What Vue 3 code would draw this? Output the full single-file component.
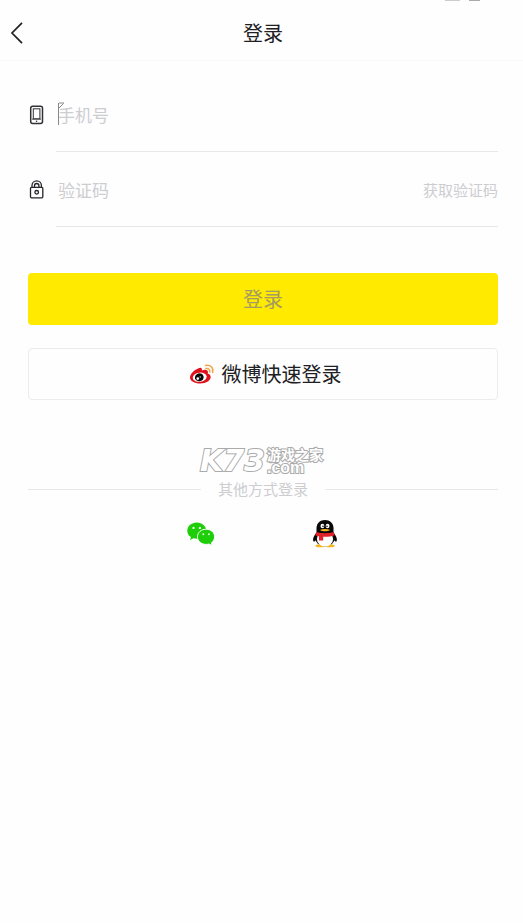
<script setup>
import { ref } from 'vue'

const phone = ref('')
const code = ref('')
</script>

<template>
  <div class="page">
    <div class="status" aria-hidden="true"><i class="long"></i><i></i></div>
    <header class="header">
      <button class="back" type="button" aria-label="返回">
        <svg width="14" height="24" viewBox="0 0 14 24" fill="none" stroke="#222" stroke-width="1.7">
          <path d="M12 1.8 2 12l10 10.2" />
        </svg>
      </button>
      <h1>登录</h1>
    </header>

    <main class="content">
      <form class="form" @submit.prevent>
        <div class="row">
          <label for="phone" aria-label="手机号">
            <svg width="17" height="20" viewBox="0 0 17 20" fill="none" stroke="#303036">
              <rect x="2.700" y="1.300" width="11.800" height="17.200" rx="2" stroke-width="1.500" />
              <rect x="5.300" y="3.800" width="6.600" height="10" stroke-width="1" />
              <path d="M4 14.200h9" stroke-width=".8" />
              <circle cx="8.600" cy="16.200" r=".8" fill="#303036" stroke="none" />
            </svg>
          </label>
          <div class="field">
            <input id="phone" v-model="phone" type="tel" placeholder="手机号">
            <svg class="caret" width="8" height="24" viewBox="0 0 8 24" fill="none" stroke="#888">
              <path d="M1.500 23V1M2 1h5M6.500 1.500 2 6" />
            </svg>
          </div>
        </div>
        <div class="row">
          <label for="code" aria-label="验证码">
            <svg width="17" height="20" viewBox="0 0 17 20" fill="none" stroke="#25252b" stroke-width="1.300">
              <rect x="2.500" y="7.300" width="12.300" height="10.500" rx="1" />
              <path d="M4 7.300V5.500a4.700 4.700 0 0 1 9.400 0v1.800M6.500 7.300V5.700a2.200 2.200 0 0 1 4.400 0v1.600" />
              <circle cx="8.700" cy="12.300" r="1.800" />
            </svg>
          </label>
          <div class="field">
            <input id="code" v-model="code" type="text" placeholder="验证码">
            <button class="send" type="button">获取验证码</button>
          </div>
        </div>
        <button class="button login" type="submit">登录</button>
        <button class="button weibo" type="button">
          <svg width="26" height="22" viewBox="0 0 26 22">
            <path d="M9.100 5.400C5.300 6.800 1 11 1 14.600c0 3.600 4.700 6 10.100 6 6.400 0 10.600-3.400 10.600-6.500 0-2.200-1.700-3.200-3-3.600.7-1.800.1-3.200-1.500-3.600-1.500-.4-3.200.1-4.400.6.6-2.300-.8-3.400-3.700-2.100Z" fill="#df101b" />
            <ellipse cx="10.700" cy="14.200" rx="7" ry="4.600" fill="#fff" transform="rotate(-6 10.700 14.200)" />
            <ellipse cx="10.300" cy="14.300" rx="4.400" ry="3.900" fill="#090909" transform="rotate(-15 10.300 14.300)" />
            <circle cx="8.800" cy="15.600" r="1.300" fill="#fff" />
            <circle cx="11.200" cy="13.900" r=".6" fill="#fff" />
            <path d="M16.500 2.500c4.800-1.200 8.400 2.400 7.100 7.100M16.900 5.600c2.600-.6 4.400 1.100 3.800 3.500" fill="none" stroke="#f2a54b" stroke-width="1.500" stroke-linecap="round" />
          </svg>
          <span>微博快速登录</span>
        </button>
      </form>

      <section class="others">
        <div class="mark">
          <span class="k73">K73</span>
          <span class="site"><span>游戏之家</span><span class="com">.com</span></span>
        </div>
        <h2>其他方式登录</h2>
        <div class="options">
          <button type="button" aria-label="微信登录">
            <svg width="28" height="28" viewBox="0 0 28 28">
              <path d="M9.800 2.500C4.500 2.500.3 6.100.3 10.700c0 2.700 1.400 4.900 3.700 6.400l-1 3 3.500-1.800c1 .3 2.200.4 3.300.4 5.300 0 9.500-3.500 9.500-8S15.100 2.500 9.800 2.500Z" fill="#1dce08" />
              <path d="M19.100 9.200c-4.900 0-8.600 3.300-8.600 7.600s3.700 7.600 8.600 7.600c1 0 2-.1 2.900-.4l3.100 1.800-.8-2.900c2-1.400 3.300-3.500 3.300-6.100 0-4.300-3.600-7.600-8.500-7.600Z" fill="#1dce08" stroke="#fff" stroke-width="1" />
              <g fill="#d9f9d2"><circle cx="6.500" cy="7.900" r="1.200" /><circle cx="12.900" cy="7.900" r="1.200" /><circle cx="16.300" cy="14.300" r="1" /><circle cx="21.900" cy="14.300" r="1" /></g>
            </svg>
          </button>
          <button type="button" aria-label="QQ登录">
            <svg width="28" height="28" viewBox="0 0 28 28">
              <path d="M6.500 12C3.500 14.500 1.400 18.500 2.300 21c.5 1.300 1.900.2 2.800-1.200h17.800c.9 1.400 2.300 2.500 2.800 1.200.9-2.500-1.200-6.500-4.200-9Z" fill="#080808" />
              <ellipse cx="14" cy="17.300" rx="9.900" ry="9.300" fill="#080808" />
              <ellipse cx="9" cy="25.800" rx="4.500" ry="1.500" fill="#f5b51b" />
              <ellipse cx="19" cy="25.800" rx="4.500" ry="1.500" fill="#f5b51b" />
              <ellipse cx="14" cy="19" rx="8.100" ry="7.500" fill="#fff" />
              <path d="M5.500 13V8.300C5.500 3.300 9.100.1 14 .1s8.500 3.200 8.500 8.200V13c-3 3-14 3-17 0Z" fill="#080808" />
              <ellipse cx="11.400" cy="6" rx="1.900" ry="2.300" fill="#fff" />
              <ellipse cx="16.600" cy="6" rx="1.900" ry="2.300" fill="#fff" />
              <circle cx="12" cy="6.300" r=".8" fill="#080808" />
              <circle cx="16" cy="6.300" r=".8" fill="#080808" />
              <path d="M8.800 9.900c3-1.300 7.400-1.300 10.400 0-2.300 1.900-8.100 1.900-10.400 0Z" fill="#f5b51b" />
              <path d="M5.300 12c5 1.600 12.400 1.600 17.400 0l1 3.200c-3.300 1.300-7.700 1.700-11.500 1.500v3.800H8v-4.200c-1.300-.2-2.600-.6-3.700-1.100Z" fill="#e22328" />
            </svg>
          </button>
        </div>
      </section>
    </main>
  </div>
</template>

<style>
body {
  background: #fefefe;
}
</style>

<style scoped>
.page {
  position: relative;
  font-family: "Noto Sans CJK SC", sans-serif;
  color: #202024;
}

button,
input {
  margin: 0;
  padding: 0;
  border: 0;
  background: none;
  font: inherit;
  color: inherit;
}

button {
  cursor: pointer;
}

svg {
  display: block;
}

.status {
  position: absolute;
  top: 0;
  right: 43px;
  display: flex;
  gap: 9px;
}

.status i {
  width: 11px;
  height: 1px;
  background: #aaa;
}

.status .long {
  width: 15px;
  background: #ccc;
}

.header {
  display: grid;
  grid-template-columns: 28px 1fr 25px;
  align-items: center;
  height: 61px;
  padding-top: 6px;
  box-sizing: border-box;
  border-bottom: 1px solid #f9f9f9;
}

.back {
  padding-left: 10px;
}

h1 {
  margin: 0;
  font-size: 20px;
  font-weight: 400;
  line-height: 30px;
  text-align: center;
}

.content {
  padding: 16px 25px 0 28px;
}

.form {
  display: flex;
  flex-direction: column;
}

.row {
  display: grid;
  grid-template-columns: 28px 1fr;
  align-items: stretch;
}

.row label {
  display: flex;
  align-items: center;
}

.field {
  position: relative;
  display: flex;
  align-items: center;
  height: 74px;
  border-bottom: 1px solid #e8e8ea;
}

.field input {
  flex: 1;
  min-width: 0;
  height: 40px;
  padding-left: 2px;
  font-size: 17px;
  outline: 0;
}

.field input::placeholder {
  color: #cdcdd1;
  opacity: 1;
}

.caret {
  position: absolute;
  left: 1px;
  top: 25px;
}

.send {
  font-size: 15px;
  color: #cdcdd1;
}

.button {
  display: flex;
  align-items: center;
  justify-content: center;
  gap: 7px;
  height: 52px;
  border-radius: 4px;
  font-size: 20px;
  line-height: 28px;
}

.login {
  margin-top: 46px;
  background: #ffea00;
  color: #a39b61;
}

.weibo {
  margin-top: 23px;
  padding-left: 4px;
  border: 1px solid #ececee;
}

.others {
  padding-top: 45px;
}

.mark {
  display: flex;
  align-items: center;
  justify-content: center;
  gap: 2px;
  height: 32px;
  padding-right: 3px;
  color: #fff;
  paint-order: stroke fill;
  -webkit-text-stroke: 2px #aaa;
}

.k73 {
  font: italic 700 30px/32px "DejaVu Sans", sans-serif;
}

.site {
  display: flex;
  flex-direction: column;
  gap: 2px;
  font-size: 14px;
  font-weight: 700;
  line-height: 12px;
}

.com {
  font-family: "Liberation Sans", sans-serif;
  font-size: 16px;
}

h2 {
  display: flex;
  align-items: center;
  gap: 17px;
  margin: 0;
  font-size: 15px;
  font-weight: 400;
  line-height: 24px;
  color: #cdcdd1;
}

h2::before,
h2::after {
  content: "";
  flex: 1;
  height: 1px;
  background: #e8e8ea;
}

.options {
  display: flex;
  justify-content: center;
  gap: 96px;
  padding-top: 19px;
}
</style>
